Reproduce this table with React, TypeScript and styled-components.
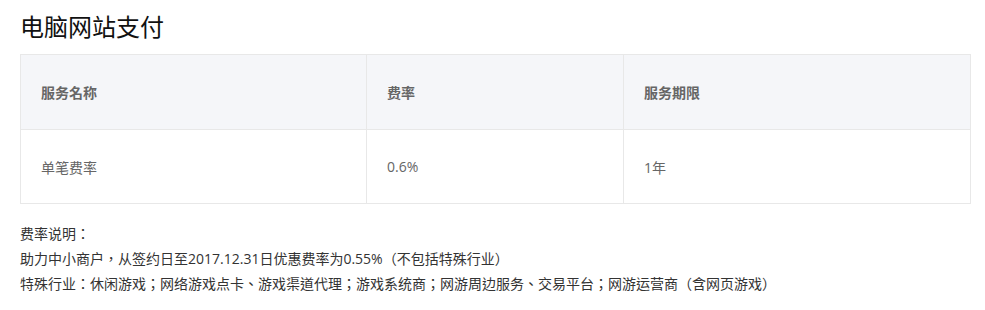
import styled, { createGlobalStyle } from "styled-components";

const GlobalStyle = createGlobalStyle`
    body {
        margin: 0;
        background: #fff;
        font-family: "Open Sans", "Noto Sans CJK TC", "Noto Sans CJK SC", sans-serif;
    }
`;

const columns = [
    { title: "服务名称", width: 346 },
    { title: "费率", width: 257 },
    { title: "服务期限", width: 347 },
];

const rows = [["单笔费率", "0.6%", "1年"]];

const notes = [
    "费率说明：",
    "助力中小商户，从签约日至2017.12.31日优惠费率为0.55%（不包括特殊行业）",
    "特殊行业：休闲游戏；网络游戏点卡、游戏渠道代理；游戏系统商；网游周边服务、交易平台；网游运营商（含网页游戏）",
];

const App = () => {
    return (
        <Page>
            <GlobalStyle />
            <Title>电脑网站支付</Title>
            <Table>
                <thead>
                    <tr>
                        {columns.map((c) => (
                            <HeadCell key={c.title} width={c.width}>
                                {c.title}
                            </HeadCell>
                        ))}
                    </tr>
                </thead>
                <tbody>
                    {rows.map((r, i) => (
                        <tr key={i}>
                            {r.map((v, j) => (
                                <BodyCell key={j}>{v}</BodyCell>
                            ))}
                        </tr>
                    ))}
                </tbody>
            </Table>
            <Notes>
                {notes.map((n, i) => (
                    <Note key={i}>{n}</Note>
                ))}
            </Notes>
        </Page>
    );
};

export default App;

const Page = styled.div`
    padding: 10px 15px 0 20px;
    width: 950px;
`;

const Title = styled.h1`
    margin: 0 0 12px;
    font-family: "Noto Sans CJK SC", sans-serif;
    font-size: 24px;
    line-height: 32px;
    font-weight: 400;
    color: #111;
`;

const Table = styled.table`
    width: 950px;
    border-collapse: collapse;
    table-layout: fixed;
    font-size: 14px;
`;

const HeadCell = styled.th<{ width: number }>`
    width: ${(p) => p.width}px;
    height: 75px;
    padding: 0 0 0 20px;
    box-sizing: border-box;
    text-align: left;
    font-weight: 700;
    color: #666;
    background: #f5f6f9;
    border: 1px solid #e8e8e8;
`;

const BodyCell = styled.td`
    height: 74px;
    padding: 0 0 0 20px;
    box-sizing: border-box;
    color: #666;
    border: 1px solid #e8e8e8;
`;

const Notes = styled.div`
    margin-top: 17px;
`;

const Note = styled.div`
    font-size: 14px;
    line-height: 25px;
    color: #333;
`;
